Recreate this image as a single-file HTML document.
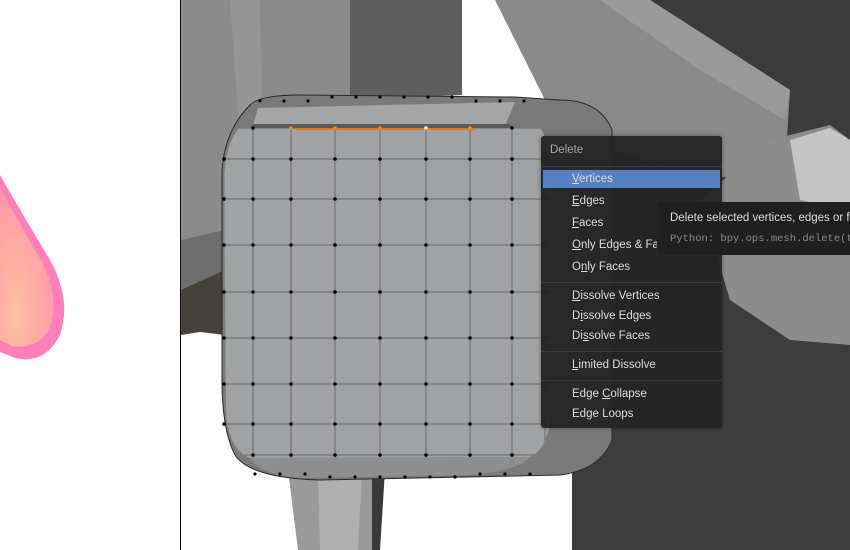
<!DOCTYPE html>
<html><head><meta charset="utf-8"><style>
body{margin:0;width:850px;height:550px;overflow:hidden;background:#fff;font-family:"Liberation Sans","DejaVu Sans",sans-serif;position:relative}
#menu{position:absolute;left:541px;top:136px;width:181px;height:292px;background:rgba(36,36,36,.96);border-radius:3px;box-shadow:0 0 4px rgba(0,0,0,.4)}
#menu div{position:absolute;left:31px;font-size:11.5px;color:#dcdcdc;line-height:14px;white-space:nowrap}
#menu .sep{left:0;width:181px;height:1px;background:#3c3c3c}
#tip{position:absolute;left:658px;top:202px;width:192px;height:53px;background:#1f1f1f;border-radius:3px 0 0 3px;overflow:hidden}
</style></head><body>
<svg width="850" height="550" style="position:absolute;left:0;top:0">
<defs><radialGradient id="pk" cx="0.3" cy="0.8" r="0.8"><stop offset="0" stop-color="#ffc0a0"/><stop offset="1" stop-color="#ff98a8"/></radialGradient>
<clipPath id="fc"><path d="M240 128 L540 128 Q550 140 552 180 L552 410 Q548 450 530 457 L250 458 Q228 450 226 410 L224 180 Q226 140 240 128 Z"/></clipPath></defs>
<path d="M0 175 Q20 210 50 260 Q72 300 60 335 Q45 365 15 358 L0 352 Z" fill="#ff7fba"/>
<path d="M0 188 Q18 220 42 262 Q60 298 50 328 Q38 350 12 346 L0 340 Z" fill="url(#pk)"/>
<line x1="180.5" y1="0" x2="180.5" y2="550" stroke="#111"/>
<rect x="181" y="0" width="670" height="550" fill="#fff"/>
<polygon points="181,0 355,0 355,100 300,110 240,240 181,240" fill="#8b8b8b"/>
<polygon points="230,0 260,0 262,120 240,140" fill="#959595"/>
<polygon points="350,0 462,0 462,95 350,100" fill="#5f5f5f"/>
<polygon points="181,240 225,230 225,335 200,330 181,332" fill="#6e6e6e"/>
<polygon points="181,290 225,270 225,335 200,332 181,335" fill="#45413c"/>
<polygon points="572,130 850,130 850,550 572,550" fill="#3d3d3d"/>
<polygon points="640,0 850,0 850,140 720,140" fill="#3b3b3b"/>
<polygon points="495,0 650,0 790,90 785,170 700,180 560,130" fill="#8a8a8a"/>
<polygon points="600,0 650,0 790,90 785,120 700,70" fill="#9a9a9a"/>
<polygon points="770,140 830,125 850,140 850,345 790,340 730,300 700,200" fill="#8c8c8c"/>
<polygon points="790,140 830,128 850,140 850,210 800,200" fill="#c4c4c4"/>
<polygon points="288,470 385,470 378,550 298,550" fill="#9a9a9a"/>
<polygon points="318,470 362,470 358,550 320,550" fill="#b0b0b0"/>
<polygon points="372,470 385,470 380,550 372,550" fill="#3a3a3a"/>
<path d="M250 105 Q260 95 300 95 L515 97 L560 100 Q600 100 612 130 L612 440 Q600 470 560 475 L320 480 Q250 478 235 455 Q222 430 222 380 L222 170 Q225 130 250 105 Z" fill="#7a7a7a" stroke="#2a2a2a"/>
<path d="M258 108 L515 102 L505 126 L253 126 Z" fill="#a4a5a6"/>
<path d="M253 124 L510 124 L515 130 L250 130 Z" fill="#5a5a5a"/>
<path d="M240 128 L540 128 Q550 140 552 180 L552 410 Q548 450 530 457 L250 458 Q228 450 226 410 L224 180 Q226 140 240 128 Z" fill="#a0a2a4"/>
<path d="M250 458 L530 457 Q520 470 470 475 L300 478 Q260 475 250 458Z" fill="#8c8e90"/>
<g id="grid" stroke="#555" stroke-width="0.7" fill="none" clip-path="url(#fc)"></g>
<line x1="296" y1="129" x2="475" y2="129" stroke="#e07a10" stroke-width="2"/>
<g id="dots" fill="#000"></g>
</svg>
<div id="menu">
<div style="left:9px;top:7px;color:#a8a8a8">Delete</div>
<div class="sep" style="top:30px"></div>
<div style="left:2px;top:34px;width:177px;height:18px;background:#5680c2"></div>
<div style="top:36px"><u>V</u>ertices</div>
<div style="top:58px"><u>E</u>dges</div>
<div style="top:80px"><u>F</u>aces</div>
<div style="top:102px;width:85px;overflow:hidden"><u>O</u>nly Edges &amp; Faces</div>
<div style="top:124px">O<u>n</u>ly Faces</div>
<div class="sep" style="top:146px"></div>
<div style="top:153px"><u>D</u>issolve Vertices</div>
<div style="top:173px">D<u>i</u>ssolve Edges</div>
<div style="top:193px">Di<u>s</u>solve Faces</div>
<div class="sep" style="top:215px"></div>
<div style="top:222px"><u>L</u>imited Dissolve</div>
<div class="sep" style="top:244px"></div>
<div style="top:251px">Edge <u>C</u>ollapse</div>
<div style="top:271px">Ed<u>g</u>e Loops</div>
</div>
<div id="tip">
<div style="position:absolute;left:12px;top:10px;font-size:11.5px;color:#ddd;white-space:nowrap">Delete selected vertices, edges or faces</div>
<div style="position:absolute;left:12px;top:31px;font-size:10.5px;color:#8a8a8a;font-family:'Liberation Mono','DejaVu Sans Mono',monospace;white-space:nowrap">Python: bpy.ops.mesh.delete(type='VERT')</div>
</div>
<script>
var xs=[224,253,291,335,380,426,470,512,545],ys=[128,159,199,245,292,338,384,424,455];
var g=document.getElementById('grid'),d=document.getElementById('dots'),s='';
for(var i=0;i<xs.length;i++){s+='<line x1="'+xs[i]+'" y1="128" x2="'+xs[i]+'" y2="458"/>';}
for(var j=0;j<ys.length;j++){s+='<line x1="224" y1="'+ys[j]+'" x2="552" y2="'+ys[j]+'"/>';}
g.innerHTML=s;s='';
for(i=0;i<xs.length;i++)for(j=0;j<ys.length;j++){if((i==0||i==8)&&(j==0||j==8))continue;var c=(j==0&&i>=2&&i<=6)?(i==5?'#fff':'#f08a20'):'#000';s+='<circle cx="'+xs[i]+'" cy="'+ys[j]+'" r="1.8" fill="'+c+'"/>';}
for(i=0;i<12;i++){s+='<circle cx="'+(260+i*24)+'" cy="'+(101-(i>2&&i<9?4:0))+'" r="1.6"/>';s+='<circle cx="'+(255+i*25)+'" cy="'+(474+(i>2&&i<9?3:0))+'" r="1.6"/>';}
d.innerHTML=s;
</script>
</body></html>
